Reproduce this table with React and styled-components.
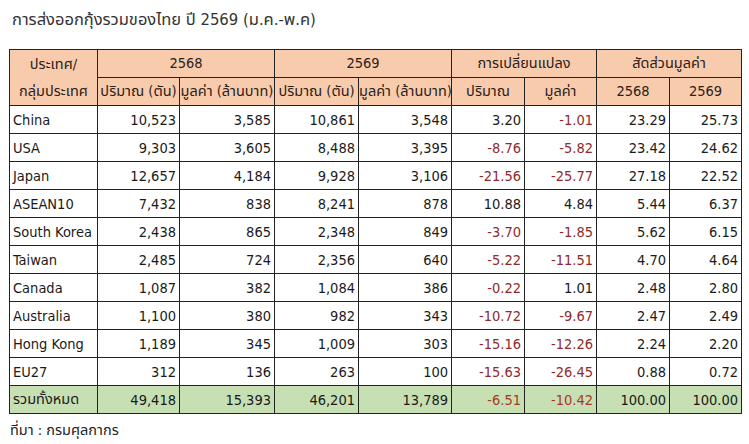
import React from 'react';
import styled, {createGlobalStyle} from 'styled-components';

const GlobalStyle = createGlobalStyle`
    body {
        margin: 0;
        background: #ffffff;
        font-family: "DejaVu Sans Condensed", "Noto Sans Thai", "Noto Sans", sans-serif;
    }
`;

const Page = styled.div`
    width: 749px;
    height: 444px;
    padding: 0 0 0 9px;
    box-sizing: border-box;
    overflow: hidden;
`;

const Title = styled.h1`
    margin: 0;
    padding: 7px 0 0 3px;
    height: 49px;
    box-sizing: border-box;
    font-size: 16.5px;
    font-weight: normal;
    color: #333333;
`;

const Table = styled.table`
    border-collapse: collapse;
    table-layout: fixed;
    width: 732px;
    font-size: 14.5px;
    color: #1a1a1a;
`;

const Head = styled.th`
    background: #f8cbad;
    border: 1px solid #222;
    font-weight: normal;
    height: ${props => props.tall ? 27 : 26}px;
    padding: 0;
    text-align: center;
    color: #2b2118;
    line-height: 27px;
    white-space: nowrap;
`;

const Row = styled.tr`
    background: ${props => props.total ? '#c6e0b4' : '#ffffff'};
`;

const Cell = styled.td`
    border: 1px solid #222;
    height: 27px;
    padding: 0 3px;
    text-align: ${props => props.name ? 'left' : 'right'};
    color: ${props => props.neg ? (props.totalNeg ? '#a83a22' : '#8f2a2a') : '#1a1a1a'};
    white-space: nowrap;
    overflow: hidden;
`;

const Source = styled.div`
    padding: 6px 0 0 1px;
    font-size: 14.5px;
    color: #222;
`;

const widths = [88, 82, 95, 84, 93, 73, 72, 73, 72];

const rows = [
    ['China', '10,523', '3,585', '10,861', '3,548', '3.20', '-1.01', '23.29', '25.73'],
    ['USA', '9,303', '3,605', '8,488', '3,395', '-8.76', '-5.82', '23.42', '24.62'],
    ['Japan', '12,657', '4,184', '9,928', '3,106', '-21.56', '-25.77', '27.18', '22.52'],
    ['ASEAN10', '7,432', '838', '8,241', '878', '10.88', '4.84', '5.44', '6.37'],
    ['South Korea', '2,438', '865', '2,348', '849', '-3.70', '-1.85', '5.62', '6.15'],
    ['Taiwan', '2,485', '724', '2,356', '640', '-5.22', '-11.51', '4.70', '4.64'],
    ['Canada', '1,087', '382', '1,084', '386', '-0.22', '1.01', '2.48', '2.80'],
    ['Australia', '1,100', '380', '982', '343', '-10.72', '-9.67', '2.47', '2.49'],
    ['Hong Kong', '1,189', '345', '1,009', '303', '-15.16', '-12.26', '2.24', '2.20'],
    ['EU27', '312', '136', '263', '100', '-15.63', '-26.45', '0.88', '0.72'],
];

const total = ['รวมทั้งหมด', '49,418', '15,393', '46,201', '13,789', '-6.51', '-10.42', '100.00', '100.00'];

const DataRow = ({values, isTotal}) => (
    <Row total={isTotal}>
        {values.map((v, i) => (
            <Cell key={i} name={i === 0} neg={v.startsWith('-')} totalNeg={isTotal}>{v}</Cell>
        ))}
    </Row>
);

const App = () => {
    return (
        <Page>
            <GlobalStyle/>
            <Title>การส่งออกกุ้งรวมของไทย ปี 2569 (ม.ค.-พ.ค)</Title>
            <Table>
                <colgroup>
                    {widths.map((w, i) => <col key={i} style={{width: w}}/>)}
                </colgroup>
                <thead>
                <tr>
                    <Head rowSpan={2}>ประเทศ/<br/>กลุ่มประเทศ</Head>
                    <Head colSpan={2} tall>2568</Head>
                    <Head colSpan={2} tall>2569</Head>
                    <Head colSpan={2} tall>การเปลี่ยนแปลง</Head>
                    <Head colSpan={2} tall>สัดส่วนมูลค่า</Head>
                </tr>
                <tr>
                    <Head>ปริมาณ (ตัน)</Head>
                    <Head>มูลค่า (ล้านบาท)</Head>
                    <Head>ปริมาณ (ตัน)</Head>
                    <Head>มูลค่า (ล้านบาท)</Head>
                    <Head>ปริมาณ</Head>
                    <Head>มูลค่า</Head>
                    <Head>2568</Head>
                    <Head>2569</Head>
                </tr>
                </thead>
                <tbody>
                {rows.map(r => <DataRow key={r[0]} values={r}/>)}
                <DataRow values={total} isTotal/>
                </tbody>
            </Table>
            <Source>ที่มา : กรมศุลกากร</Source>
        </Page>
    );
};

export default App;
